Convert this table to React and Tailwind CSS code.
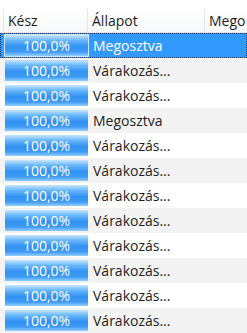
import React from 'react';

const rows = [
  'Megosztva',
  'Várakozás...',
  'Várakozás...',
  'Megosztva',
  'Várakozás...',
  'Várakozás...',
  'Várakozás...',
  'Várakozás...',
  'Várakozás...',
  'Várakozás...',
  'Várakozás...',
  'Várakozás...',
];

const Bar = ({ selected }) => (
  <div
    className={`h-[21px] w-[83px] flex items-center justify-center text-white bg-[linear-gradient(to_bottom,#c8e6ff_0%,#6ab8fa_25%,#3291f2_55%,#3e9af4_80%,#92ceff_100%)] ${
      selected ? 'outline outline-1 outline-[#cfe6ff]' : ''
    }`}
  >
    100,0%
  </div>
);

const App = () => {
  return (
    <div
      className="w-[247px] h-[333px] overflow-hidden bg-white text-[14px] text-[#1e1e1e]"
      style={{ fontFamily: '"Open Sans", "Noto Sans", sans-serif' }}
    >
      {/* header */}
      <div className="h-[33px] flex items-end border-b border-[#e3e5e8] bg-[linear-gradient(to_bottom,#ffffff,#ffffff_30%,#f7f8fa)]">
        <div className="w-[4px] h-[23px] border-r border-[#e3e5e8]" />
        <div className="w-[84px] h-[23px] border-r border-[#e3e5e8] pl-[4px] flex items-center">Kész</div>
        <div className="w-[117px] h-[23px] border-r border-[#e3e5e8] pl-[4px] flex items-center">Állapot</div>
        <div className="w-[42px] h-[23px] pl-[4px] flex items-center whitespace-nowrap overflow-hidden">Mego</div>
      </div>

      {rows.map((status, i) => {
        const selected = i === 0;
        return (
          <div
            key={i}
            className={`h-[25px] flex items-center ${
              selected
                ? 'bg-[#3399ff] text-white border border-dotted border-[#1a3a70]'
                : i % 2 === 1
                ? 'bg-[#f3f3f3]'
                : 'bg-white'
            }`}
          >
            <div className={selected ? 'w-[4px]' : 'w-[5px]'} />
            <Bar selected={selected} />
            <div className="pl-[5px] whitespace-nowrap">{status}</div>
          </div>
        );
      })}
    </div>
  );
};

export default App;
